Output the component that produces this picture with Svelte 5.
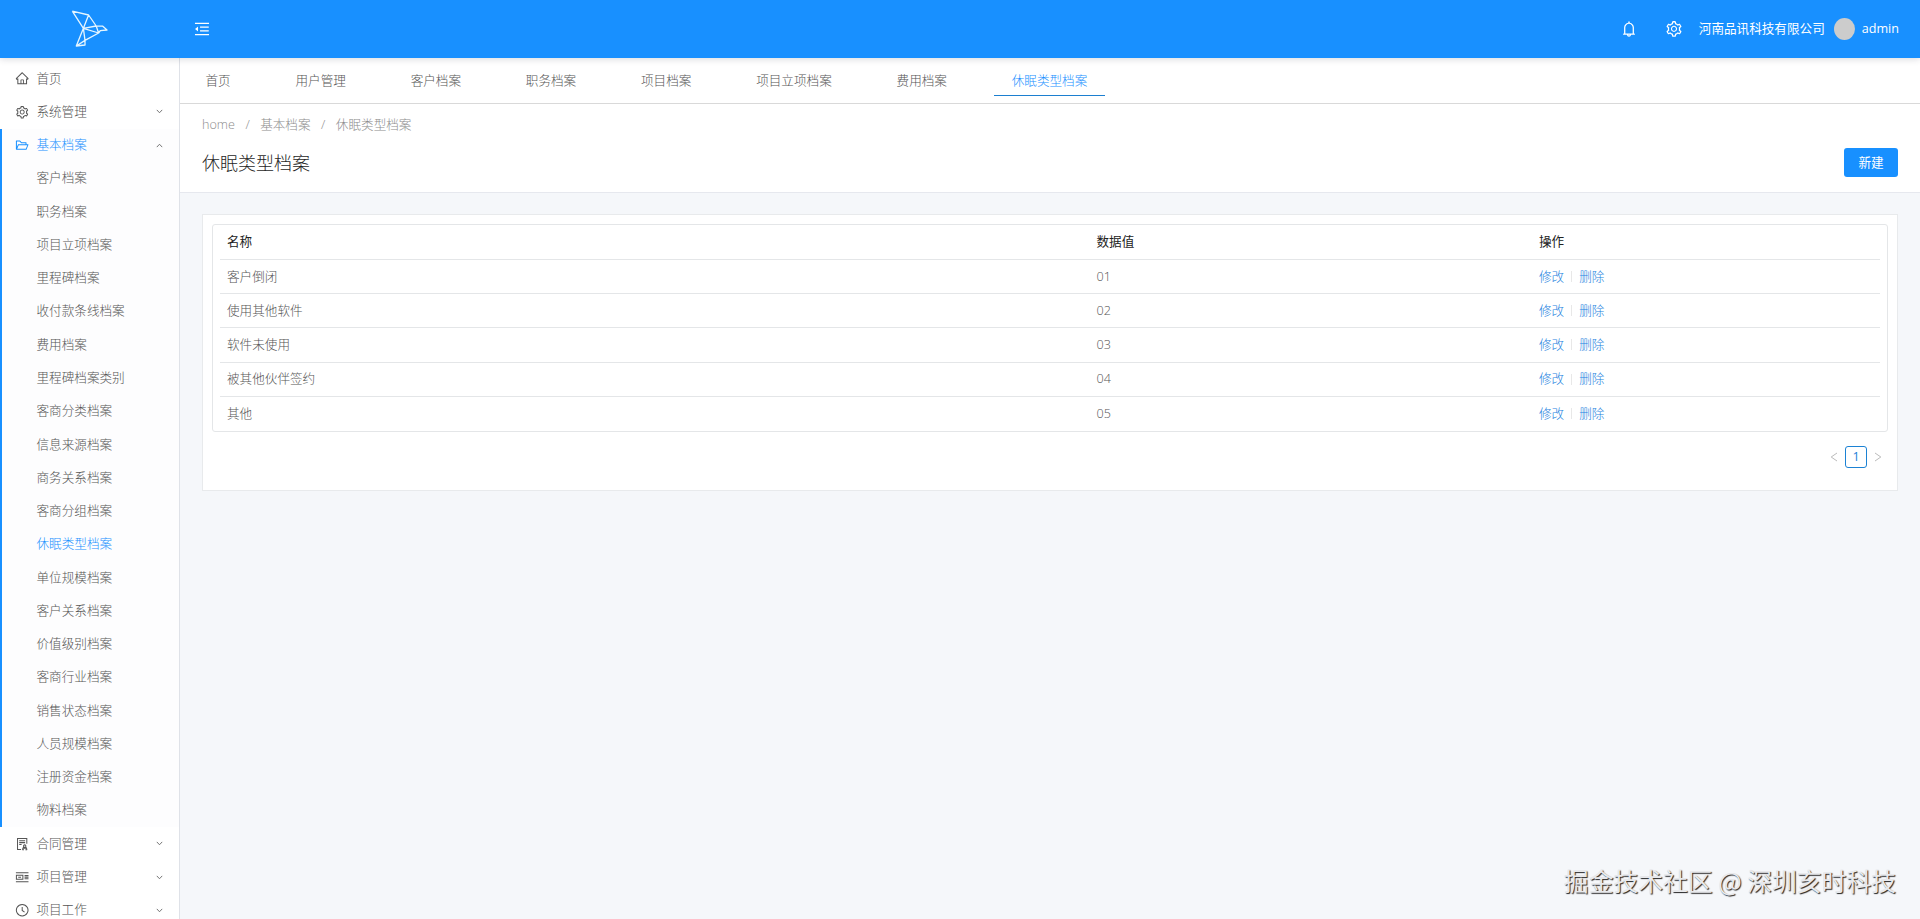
<script lang="ts">
	type IconName = 'home' | 'setting' | 'folder' | 'audit' | 'profile' | 'clock';

	interface IMenu {
		title: string;
		icon: IconName;
		leaf?: boolean;
		children?: string[];
	}

	const filled: Record<string, string> = {
		home: 'M946.5 505L560.1 118.8l-25.9-25.9a31.5 31.5 0 0 0-44.4 0L77.5 505a63.9 63.9 0 0 0-18.8 46c.4 35.2 29.7 63.3 64.9 63.3h42.5V940h691.8V614.3h43.4c17.1 0 33.2-6.7 45.3-18.8a63.6 63.6 0 0 0 18.7-45.3c0-17-6.7-33.1-18.8-45.2zM568 868H456V664h112v204zm217.9-325.7V868H632V640c0-22.1-17.9-40-40-40H432c-22.1 0-40 17.9-40 40v228H238.1V542.3h-96l370-369.7 23.1 23.1L882 542.3h-96.1z',
		setting:
			'M924.8 625.7l-65.5-56c3.1-19 4.7-38.4 4.7-57.8s-1.6-38.8-4.7-57.8l65.5-56a32.03 32.03 0 0 0 9.3-35.2l-.9-2.6a443.74 443.74 0 0 0-79.7-137.9l-1.8-2.1a32.12 32.12 0 0 0-35.1-9.5l-81.3 28.9c-30-24.6-63.5-44-99.7-57.6l-15.7-85a32.05 32.05 0 0 0-25.8-25.7l-2.7-.5c-52.1-9.4-106.9-9.4-159 0l-2.7.5a32.05 32.05 0 0 0-25.8 25.7l-15.8 85.4a351.86 351.86 0 0 0-99 57.4l-81.9-29.1a32 32 0 0 0-35.1 9.5l-1.8 2.1a446.02 446.02 0 0 0-79.7 137.9l-.9 2.6c-4.5 12.5-.8 26.5 9.3 35.2l66.3 56.6c-3.1 18.8-4.6 38-4.6 57.1 0 19.2 1.5 38.4 4.6 57.1L99 625.5a32.03 32.03 0 0 0-9.3 35.2l.9 2.6c18.1 50.4 44.9 96.9 79.7 137.9l1.8 2.1a32.12 32.12 0 0 0 35.1 9.5l81.9-29.1c29.8 24.5 63.1 43.9 99 57.4l15.8 85.4a32.05 32.05 0 0 0 25.8 25.7l2.7.5a449.4 449.4 0 0 0 159 0l2.7-.5a32.05 32.05 0 0 0 25.8-25.7l15.7-85a350 350 0 0 0 99.7-57.6l81.3 28.9a32 32 0 0 0 35.1-9.5l1.8-2.1c34.8-41.1 61.6-87.5 79.7-137.9l.9-2.6c4.5-12.3.8-26.3-9.3-35zM788.3 465.9c2.5 15.1 3.8 30.6 3.8 46.1s-1.3 31-3.8 46.1l-6.6 40.1 74.7 63.9a370.03 370.03 0 0 1-42.6 73.6L721 702.8l-31.4 25.8c-23.9 19.6-50.5 35-79.3 45.8l-38.1 14.3-17.9 97a377.5 377.5 0 0 1-85 0l-17.9-97.2-37.8-14.5c-28.5-10.8-55-26.2-78.7-45.7l-31.4-25.9-93.4 33.2c-17-22.9-31.2-47.6-42.6-73.6l75.5-64.5-6.5-40c-2.4-14.9-3.7-30.3-3.7-45.5 0-15.3 1.2-30.6 3.7-45.5l6.5-40-75.5-64.5c11.3-26.1 25.6-50.7 42.6-73.6l93.4 33.2 31.4-25.9c23.7-19.5 50.2-34.9 78.7-45.7l37.9-14.3 17.9-97.2c28.1-3.2 56.8-3.2 85 0l17.9 97 38.1 14.3c28.7 10.8 55.4 26.2 79.3 45.8l31.4 25.8 92.8-32.9c17 22.9 31.2 47.6 42.6 73.6L781.8 426l6.5 39.9zM512 326c-97.2 0-176 78.8-176 176s78.8 176 176 176 176-78.8 176-176-78.8-176-176-176zm79.2 255.2A111.6 111.6 0 0 1 512 614c-29.9 0-58-11.7-79.2-32.8A111.6 111.6 0 0 1 400 502c0-29.9 11.7-58 32.8-79.2C454 401.6 482.1 390 512 390c29.9 0 58 11.6 79.2 32.8A111.6 111.6 0 0 1 624 502c0 29.9-11.7 58-32.8 79.2z',
		folder:
			'M928 444H820V330.4c0-17.7-14.3-32-32-32H473L355.7 186.2a8.15 8.15 0 0 0-5.5-2.2H96c-17.7 0-32 14.3-32 32v592c0 17.7 14.3 32 32 32h698c13 0 24.8-7.9 29.7-20l134-332c1.5-3.8 2.3-7.9 2.3-12 0-17.7-14.3-32-32-32zM136 256h188.5l119.6 114.4H748V444H238c-13 0-24.8 7.9-29.7 20L136 643.2V256zm635.3 512H159l103.3-256h612.4L771.3 768z',
		bell: 'M816 768h-24V428c0-141.1-104.3-257.7-240-277.1V112c0-22.1-17.9-40-40-40s-40 17.9-40 40v38.9c-135.7 19.4-240 136-240 277.1v340h-24c-17.7 0-32 14.3-32 32v32c0 4.4 3.6 8 8 8h216c0 61.8 50.2 112 112 112s112-50.2 112-112h216c4.4 0 8-3.6 8-8v-32c0-17.7-14.3-32-32-32zM512 888c-26.5 0-48-21.5-48-48h96c0 26.5-21.5 48-48 48zM304 768V428c0-55.6 21.6-107.8 60.9-147.1S456.4 220 512 220c55.6 0 107.8 21.6 147.1 60.9S720 372.4 720 428v340H304z',
		fold: 'M408 442h480c4.4 0 8-3.6 8-8v-56c0-4.4-3.6-8-8-8H408c-4.4 0-8 3.6-8 8v56c0 4.4 3.6 8 8 8zm-8 204c0 4.4 3.6 8 8 8h480c4.4 0 8-3.6 8-8v-56c0-4.4-3.6-8-8-8H408c-4.4 0-8 3.6-8 8v56zm504-486H120c-4.4 0-8 3.6-8 8v56c0 4.4 3.6 8 8 8h784c4.4 0 8-3.6 8-8v-56c0-4.4-3.6-8-8-8zm0 632H120c-4.4 0-8 3.6-8 8v56c0 4.4 3.6 8 8 8h784c4.4 0 8-3.6 8-8v-56c0-4.4-3.6-8-8-8zM115.4 518.9L271.7 642c5.8 4.6 14.4.5 14.4-6.9V388.9c0-7.4-8.5-11.5-14.4-6.9L115.4 505.1a8.74 8.74 0 0 0 0 13.8z'
	};

	const outlined: Record<string, string> = {
		audit: 'M430 890H180V110H840V480M300 270H720M300 400H720M300 530H470M690 560a85 85 0 1 0 .1 0M520 910L600 720M860 910L780 720M520 910H640M740 910H860M600 800H780',
		profile: 'M64 190H960M64 834H960M100 370H560V654H100ZM230 512H430M680 400H960M680 512H960M680 624H960',
		clock: 'M512 100a412 412 0 1 0 .1 0M512 280V530L680 650'
	};

	const menus: IMenu[] = [
		{ title: '首页', icon: 'home', leaf: true },
		{ title: '系统管理', icon: 'setting' },
		{
			title: '基本档案',
			icon: 'folder',
			children: [
				'客户档案',
				'职务档案',
				'项目立项档案',
				'里程碑档案',
				'收付款条线档案',
				'费用档案',
				'里程碑档案类别',
				'客商分类档案',
				'信息来源档案',
				'商务关系档案',
				'客商分组档案',
				'休眠类型档案',
				'单位规模档案',
				'客户关系档案',
				'价值级别档案',
				'客商行业档案',
				'销售状态档案',
				'人员规模档案',
				'注册资金档案',
				'物料档案'
			]
		},
		{ title: '合同管理', icon: 'audit' },
		{ title: '项目管理', icon: 'profile' },
		{ title: '项目工作', icon: 'clock' }
	];

	const tabs = ['首页', '用户管理', '客户档案', '职务档案', '项目档案', '项目立项档案', '费用档案', '休眠类型档案'];

	const rows = [
		{ name: '客户倒闭', value: '01' },
		{ name: '使用其他软件', value: '02' },
		{ name: '软件未使用', value: '03' },
		{ name: '被其他伙伴签约', value: '04' },
		{ name: '其他', value: '05' }
	];

	let current = $state('休眠类型档案');
</script>

{#snippet icon(name: string)}
	<svg class="icon" viewBox="0 0 1024 1024" aria-hidden="true">
		{#if filled[name]}
			<path d={filled[name]} fill="currentColor" />
		{:else}
			<path d={outlined[name]} fill="none" stroke="currentColor" stroke-width="72" />
		{/if}
	</svg>
{/snippet}

{#snippet chevron(dir: string)}
	<svg class={['chevron', dir]} viewBox="0 0 10 10" aria-hidden="true">
		<path d="M2 3.2L5 6.4L8 3.2" fill="none" stroke="currentColor" />
	</svg>
{/snippet}

<div class="layout">
	<header class="header">
		<div class="logo">
			<svg viewBox="0 0 38 38" aria-hidden="true">
				<path
					d="M1.3 1.2L17.6 5L25.2 16L31.8 16.2L36 20L29.3 20.6L27.6 23L14 30.4V35L5.3 36L12.4 18.3L1.3 1.2M17.6 5L12.4 18.3L14 30.4M5.3 36L14 30.4M12.4 18.3L25.2 16L27.6 23L12.4 18.3"
				/>
			</svg>
		</div>
		<button class="head-btn" aria-label="menu">{@render icon('fold')}</button>
		<div class="head-right">
			<button class="head-btn bell" aria-label="notice">{@render icon('bell')}</button>
			<button class="head-btn" aria-label="setting">{@render icon('setting')}</button>
			<span class="company">河南品讯科技有限公司</span>
			<span class="avatar"></span>
			<span class="user">admin</span>
		</div>
	</header>

	<div class="body">
		<aside class="sider">
			{#each menus as menu}
				<div class={['group', menu.children && 'open']}>
					<div class="menu-item">
						{@render icon(menu.icon)}
						<span>{menu.title}</span>
						{#if !menu.leaf}
							{@render chevron(menu.children ? 'up' : 'down')}
						{/if}
					</div>
					{#each menu.children ?? [] as child}
						<div class={['sub-item', child === current && 'active']}>{child}</div>
					{/each}
				</div>
			{/each}
		</aside>

		<main class="main">
			<nav class="tabs">
				{#each tabs as tab}
					<div class={['tab', tab === current && 'active']}>{tab}</div>
				{/each}
			</nav>

			<section class="page-head">
				<div class="breadcrumb">
					<span>home</span><i>/</i><span>基本档案</span><i>/</i><span>{current}</span>
				</div>
				<div class="title-row">
					<h1>{current}</h1>
					<button class="create">新建</button>
				</div>
			</section>

			<section class="card">
				<div class="table">
					<div class="row head">
						<span>名称</span>
						<span>数据值</span>
						<span>操作</span>
					</div>
					{#each rows as row}
						<div class="row">
							<span>{row.name}</span>
							<span>{row.value}</span>
							<span class="actions">
								<a href="#edit">修改</a>
								<i></i>
								<a href="#delete">删除</a>
							</span>
						</div>
					{/each}
				</div>
				<div class="pagination">
					<svg viewBox="0 0 8 10"><path d="M7 1L1.2 5L7 9" /></svg>
					<span class="page">1</span>
					<svg viewBox="0 0 8 10"><path d="M1 1L6.8 5L1 9" /></svg>
				</div>
			</section>
		</main>
	</div>

	<div class="watermark">掘金技术社区 @ 深圳亥时科技</div>
</div>

<style>
	:global(body) {
		margin: 0;
		overflow: hidden;
	}

	.layout {
		display: flex;
		flex-direction: column;
		height: 100vh;
		overflow: hidden;
		background: #f5f7fa;
		color: #515a6e;
		color: #555;
		font-family: 'Open Sans', 'Noto Sans CJK SC', sans-serif;
		font-size: 12.6px;
		font-weight: 300;
		line-height: 20px;
	}

	button {
		padding: 0;
		border: none;
		background: none;
		color: inherit;
		font: inherit;
	}

	.icon {
		display: block;
		flex: none;
		width: 14.4px;
		height: 14.4px;
	}

	/* Header */
	.header {
		position: relative;
		z-index: 2;
		display: flex;
		flex: none;
		align-items: center;
		height: 58px;
		background: #1890ff;
		box-shadow: 0 1px 7px rgba(0, 21, 41, 0.16);
		color: #fff;
		font-weight: 400;
	}

	.logo {
		display: flex;
		justify-content: center;
		width: 180px;
	}

	.logo svg {
		width: 38px;
		height: 38px;
		fill: none;
		stroke: #e6f6ff;
		stroke-width: 1.3;
		stroke-linejoin: round;
	}

	.head-btn .icon {
		width: 18px;
		height: 18px;
	}

	.header > .head-btn {
		margin-left: 13px;
	}

	.head-right {
		display: flex;
		align-items: center;
		margin-left: auto;
		padding-right: 21px;
	}

	.bell {
		margin-right: 27px;
	}

	.company {
		margin-left: 16px;
	}

	.avatar {
		width: 21px;
		height: 22px;
		margin: 0 7px 0 9px;
		border-radius: 50%;
		background: #ccc;
	}

	.body {
		display: flex;
		flex: 1;
		min-height: 0;
	}

	/* Sider */
	.sider {
		flex: none;
		box-sizing: border-box;
		width: 180px;
		padding-top: 4px;
		overflow: hidden;
		border-right: 1px solid #dfe2e8;
		background: #fff;
	}

	.group.open {
		background: #fdfdfe;
		box-shadow: inset 2px 0 #1890ff;
	}

	.menu-item,
	.sub-item {
		display: flex;
		align-items: center;
		box-sizing: border-box;
		height: 33.28px;
	}

	.menu-item {
		gap: 7px;
		padding: 0 15px;
	}

	.group.open .menu-item,
	.sub-item.active {
		color: #1890ff;
	}

	.sub-item {
		padding-left: 36.5px;
	}

	.chevron {
		width: 9px;
		height: 9px;
		margin-left: auto;
		color: #666;
	}

	.chevron.up {
		transform: scaleY(-1);
	}

	.main {
		flex: 1;
		min-width: 0;
	}

	/* Tabs */
	.tabs {
		display: flex;
		gap: 28.8px;
		box-sizing: border-box;
		height: 46px;
		padding-left: 7.5px;
		border-bottom: 1px solid #d9d9d9;
		background: #fff;
	}

	.tab {
		box-sizing: border-box;
		height: 38px;
		padding: 13px 18px 0;
	}

	.tab.active {
		border-bottom: 1px solid #1c7fd0;
		color: #1890ff;
	}

	/* Page head */
	.page-head {
		box-sizing: border-box;
		height: 89px;
		padding: 11px 22px 0;
		border-bottom: 1px solid #e6e8ee;
		background: #fff;
	}

	.breadcrumb {
		color: #8c8c8c;
	}

	.breadcrumb i {
		margin: 0 10.5px;
		font-style: normal;
	}

	.title-row {
		display: flex;
		align-items: center;
		justify-content: space-between;
		margin-top: 13px;
	}

	h1 {
		margin: 0;
		color: #1f1f1f;
		font-size: 18px;
		font-weight: 300;
		line-height: 28px;
	}

	.create {
		width: 54px;
		height: 29px;
		border-radius: 3px;
		background: #1890ff;
		color: #fff;
		font-weight: 400;
	}

	/* Table card */
	.card {
		box-sizing: border-box;
		height: 277px;
		margin: 21px 22px 0;
		padding: 9px;
		border: 1px solid #e8eaec;
		background: #fff;
	}

	.table {
		padding: 0 7px;
		border: 1px solid #e4e6e8;
		border-radius: 3px;
	}

	.row {
		display: grid;
		grid-template-columns: 869.5px 442.5px 1fr;
		align-items: center;
		box-sizing: border-box;
		height: 34.2px;
		padding-left: 7px;
		border-bottom: 1px solid #e4e6e8;
	}

	.row:last-child {
		border-bottom: none;
	}

	.row.head {
		height: 35px;
		color: #222;
		font-weight: 400;
	}

	.actions {
		display: flex;
		align-items: center;
	}

	.actions i {
		width: 1px;
		height: 11px;
		margin: 0 7px;
		background: #e8e8e8;
	}

	a {
		color: #1c82e0;
		text-decoration: none;
	}

	.pagination {
		display: flex;
		align-items: center;
		justify-content: flex-end;
		gap: 7px;
		margin-top: 14px;
		padding-right: 6px;
	}

	.pagination svg {
		width: 8px;
		height: 10px;
		fill: none;
		stroke: #bbb;
	}

	.page {
		box-sizing: border-box;
		width: 22px;
		height: 22px;
		border: 1px solid #1c82d4;
		border-radius: 3px;
		color: #1c7fd8;
		font-weight: 400;
		line-height: 19px;
		text-align: center;
	}

	.watermark {
		position: absolute;
		right: 24px;
		bottom: 21px;
		color: #e8e9ec;
		font-family: 'Noto Sans CJK SC', sans-serif;
		font-size: 24.8px;
		font-weight: 400;
		line-height: 36px;
		text-shadow: 1px 1px 1px #222;
	}
</style>
